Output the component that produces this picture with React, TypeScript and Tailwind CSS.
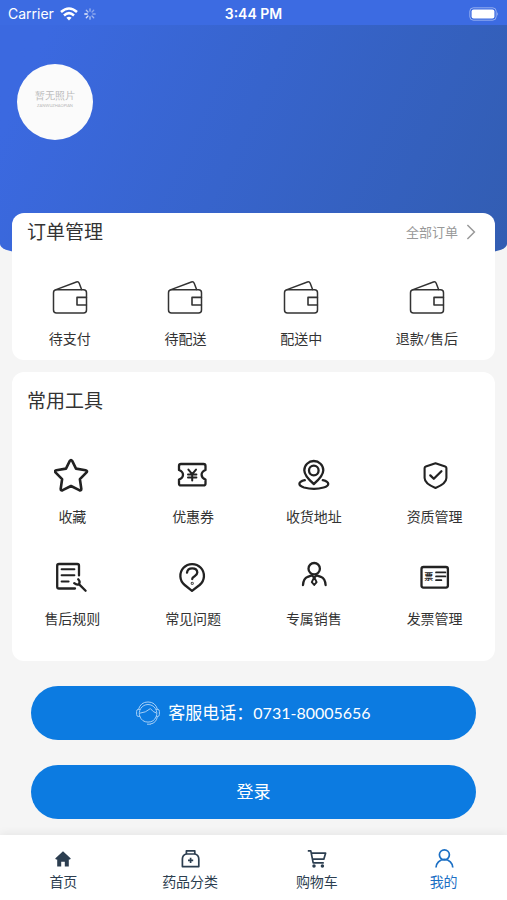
import React from "react";

const WalletIcon = () => (
    <svg viewBox="0 0 36 36" className="size-9" fill="none" stroke="#333333" strokeWidth="1.5" strokeLinejoin="round" strokeLinecap="round">
        <rect x="1.5" y="10.8" width="33" height="23.3" rx="3" />
        <path d="M4 10.6 L24.4 3 Q26.4 2.3 27.2 4.3 L29.6 10.6" />
        <path d="M34.4 18.4 H25 V26 H34.4" strokeWidth="1.6" />
    </svg>
);

const StarIcon = () => (
    <>
        <path d="M15.8 3.9 Q17 2 18.2 3.9 L22 11.6 L31.6 13.2 Q34 13.9 32.3 15.7 L25.9 22.2 L27.3 31.8 Q27.4 34 25.3 33.2 L17 29 L8.7 33.2 Q6.6 34 6.7 31.8 L8.1 22.2 L1.7 15.7 Q0 13.9 2.4 13.2 L12 11.6 Z" strokeWidth="2.6" />
    </>
);

const CouponIcon = () => (
    <>
        <path d="M6 7 H28.5 Q30.5 7 30.5 9 V13 Q26.6 14.6 26.6 17.8 Q26.6 21 30.5 22.6 V26.4 Q30.5 28.4 28.5 28.4 H6 Q4 28.4 4 26.4 V22.6 Q8 21 8 17.8 Q8 14.6 4 13 V9 Q4 7 6 7 Z" />
        <path d="M13.4 12.6 L17.2 17.2 L21 12.6 M17.2 17.2 V23.6 M13 17.4 H21.4 M13 20.6 H21.4" strokeWidth="2" />
    </>
);

const AddressIcon = () => (
    <>
        <path d="M17.8 27 Q8.3 19 8.3 13.3 A9.5 9.3 0 0 1 27.3 13.3 Q27.3 19 17.8 27 Z" />
        <circle cx="17.8" cy="13.5" r="4.8" />
        <path d="M8.8 23.2 C1.5 25 2 28.6 8 30.5 C14 32.1 22 32.1 27.6 30.5 C33.8 28.6 34 25 26.8 23.2" />
    </>
);

const ShieldIcon = () => (
    <>
        <path d="M18.5 6.2 L28.2 9.4 Q29.4 9.8 29.4 11 V21 Q29.4 26.5 18.5 31 Q7.6 26.5 7.6 21 V11 Q7.6 9.8 8.8 9.4 Z" strokeWidth="2.1" />
        <path d="M13.3 18.4 L16.8 21.8 L24.4 14.2" />
    </>
);

const RulesIcon = () => (
    <>
        <path d="M21 29.5 H5 Q3.2 29.5 3.2 27.7 V6.7 Q3.2 5 5 5 H23.3 Q25 5 25 6.7 V16.4" />
        <path d="M7.6 10.2 H20.4 M7.6 16.2 H20.4 M7.6 22.6 H14.6" strokeWidth="2" />
        <path d="M20.2 24.2 Q23.3 26.8 25.2 24.8 Q26.4 22.5 24.2 20.3 M25.2 25.4 L31.6 31.8" />
    </>
);

const QuestionIcon = () => (
    <>
        <path d="M17 31.8 L9.7 26 A11.8 11.8 0 1 1 24.6 26 Z" />
        <path d="M12 13.6 Q12.6 9.4 17.2 9.4 Q22.2 9.4 22.3 13.6 Q22.3 15.6 19.6 17.2 Q17.2 18.6 17.2 20" />
        <circle cx="17.2" cy="24.2" r="0.4" />
    </>
);

const SalesIcon = () => (
    <>
        <circle cx="18.2" cy="9.7" r="5.7" />
        <path d="M7 26 Q7.4 19.6 11.8 17.8 L15.6 16.4 L18.2 18.4 L20.8 16.4 L24.8 17.8 Q29.2 19.6 29.6 26" />
        <path d="M18.2 18.2 L15.8 23.2 L18.2 26 L20.6 23.2 Z" strokeWidth="1.9" />
    </>
);

const InvoiceIcon = () => (
    <>
        <rect x="4.5" y="8" width="26.4" height="20.6" rx="2" />
        <text x="7.3" y="20.6" fontSize="9" fontWeight="700" fill="#222222" stroke="none">票</text>
        <path d="M19 13.4 H28.4 M19 17.4 H28.4 M19 21.2 H24.4" strokeWidth="1.7" />
    </>
);

const HeadsetIcon = () => (
    <svg viewBox="0 0 24 26" className="h-[26px] w-6" fill="none" stroke="#a5cff7" strokeWidth="1" strokeLinecap="round" strokeLinejoin="round">
        <path d="M2.6 9 A9.8 9.8 0 0 1 21.4 9" />
        <path d="M3.8 16.5 A8.8 8.8 0 1 1 20.2 16.5 A8.8 8.8 0 0 1 3.8 16.5" />
        <path d="M3.6 9.4 H2.2 Q0.6 9.4 0.6 11.4 V14.4 Q0.6 16.4 2.2 16.4 H3.6 M20.4 9.4 H21.8 Q23.4 9.4 23.4 11.4 V14.4 Q23.4 16.4 21.8 16.4 H20.4" />
        <path d="M4 13.2 Q9.6 12.8 14.4 8.6 Q17 12.2 20.2 13" />
        <path d="M21.4 16.6 Q20.6 23 14.6 24 M11.4 24.2 H14.4" />
    </svg>
);

const HomeIcon = () => (
    <path fill="currentColor" stroke="none" d="M12 4.2 L19.8 11.6 L19 12.4 H17.8 V19.6 H13.8 V14.8 H10.2 V19.6 H6.2 V12.4 H5 L4.2 11.6 Z" />
);

const MedicineIcon = () => (
    <>
        <path d="M8.4 3.8 H16.8 V7 H8.4 Z" />
        <path d="M8.4 7 Q4.4 8 4.4 12 V19.6 H20.8 V12 Q20.8 8 16.8 7" />
        <path d="M12.6 10.8 V16 M10 13.4 H15.2" />
    </>
);

const CartIcon = () => (
    <>
        <path d="M2.8 3.9 H5.8 L8.2 15.8 H18.8 M6.4 6.2 H20.6 L18.8 12.2 H7.6" />
        <circle cx="9" cy="19" r="0.9" fill="currentColor" />
        <circle cx="17.4" cy="19" r="0.9" fill="currentColor" />
    </>
);

const UserIcon = () => (
    <>
        <circle cx="12.4" cy="7.8" r="5" />
        <path d="M4 20.6 A8.4 8.2 0 0 1 20.8 20.6" />
    </>
);

const orders = ["待支付", "待配送", "配送中", "退款/售后"];

const tools = [
    { label: "收藏", Icon: StarIcon },
    { label: "优惠券", Icon: CouponIcon },
    { label: "收货地址", Icon: AddressIcon },
    { label: "资质管理", Icon: ShieldIcon },
    { label: "售后规则", Icon: RulesIcon },
    { label: "常见问题", Icon: QuestionIcon },
    { label: "专属销售", Icon: SalesIcon },
    { label: "发票管理", Icon: InvoiceIcon },
];

const tabs = [
    { label: "首页", Icon: HomeIcon, active: false },
    { label: "药品分类", Icon: MedicineIcon, active: false },
    { label: "购物车", Icon: CartIcon, active: false },
    { label: "我的", Icon: UserIcon, active: true },
];

const StatusBar = () => (
    <div className="grid h-[25px] grid-cols-3 items-center bg-[#3c6be2] px-2 pt-0.5 font-['Inter','Liberation_Sans',sans-serif] text-sm text-white">
        <div className="flex items-center gap-1.5">
            <span>Carrier</span>
            <svg viewBox="0 0 18 14" className="h-3.5 w-[18px]" fill="none" stroke="white" strokeWidth="2.6">
                <path d="M1 5 Q9 -2 17 5" />
                <path d="M4 8.4 Q9 4 14 8.4" />
                <path d="M9 13.4 L6.4 10.8 Q9 8.8 11.6 10.8 Z" fill="white" stroke="none" />
            </svg>
            <svg viewBox="0 0 12 12" className="size-3" stroke="white" strokeWidth="1.3" strokeLinecap="round">
                <path d="M6 0.8 V3.2" opacity="0.5" />
                <path d="M9.7 2.3 L8 4" opacity="0.4" />
                <path d="M11.2 6 H8.8" opacity="0.4" />
                <path d="M9.7 9.7 L8 8" opacity="0.5" />
                <path d="M6 11.2 V8.8" opacity="0.6" />
                <path d="M2.3 9.7 L4 8" opacity="0.8" />
                <path d="M0.8 6 H3.2" opacity="0.9" />
                <path d="M2.3 2.3 L4 4" opacity="0.6" />
            </svg>
        </div>
        <div className="text-center font-semibold">3:44 PM</div>
        <svg viewBox="0 0 30 14" className="h-3.5 w-[30px] justify-self-end">
            <rect x="0.8" y="0.8" width="26.4" height="12.4" rx="3.6" fill="none" stroke="white" strokeOpacity="0.45" />
            <rect x="2.6" y="2.6" width="22.8" height="8.8" rx="2" fill="white" />
            <path d="M28.2 5 Q30 7 28.2 9 Z" fill="white" fillOpacity="0.5" />
        </svg>
    </div>
);

const App = () => {
    return (
        <div className="flex min-h-screen flex-col bg-[#f5f5f5] font-['Lato','Noto_Sans_CJK_SC',sans-serif] text-[#333333]">
            {/* Header */}
            <header className="overflow-hidden rounded-[0_0_20px_20px/0_0_8px_8px] bg-linear-115 from-[#3b69e0] from-10% to-[#325db2]">
                <StatusBar />
                <div className="h-[227px] px-[17px] pt-[39px]">
                    <div className="flex size-[76px] flex-col items-center justify-center rounded-full bg-[#fbfbfb] pb-1 text-[#b8b8b8]">
                        <span className="font-serif text-[10px] leading-3">暂无照片</span>
                        <span className="text-[4px] leading-2">ZANWUZHAOPIAN</span>
                    </div>
                </div>
            </header>

            <main className="flex flex-col gap-3 px-3 pb-4">
                {/* Orders */}
                <section className="-mt-[39px] rounded-xl bg-white pt-[7px] pb-[11px]">
                    <div className="flex items-center justify-between pr-[19px] pl-[15px]">
                        <h2 className="text-[19px] leading-6">订单管理</h2>
                        <a href="#orders" className="flex items-center gap-2 text-[13px] leading-6 text-[#999999]">
                            全部订单
                            <svg viewBox="0 0 10 16" className="h-4 w-2.5" fill="none" stroke="currentColor" strokeWidth="1.5">
                                <path d="M1.4 1 L8.4 8 L1.4 15" />
                            </svg>
                        </a>
                    </div>
                    <div className="mt-[35px] flex justify-around">
                        {orders.map((label) => (
                            <button key={label} type="button" className="flex flex-col items-center gap-3.5 text-sm leading-5">
                                <WalletIcon />
                                {label}
                            </button>
                        ))}
                    </div>
                </section>

                {/* Tools */}
                <section className="rounded-xl bg-white pt-[17px] pb-8">
                    <h2 className="pl-[15px] text-[19px] leading-6">常用工具</h2>
                    <div className="mt-11 grid grid-cols-4 gap-y-8">
                        {tools.map(({ label, Icon }) => (
                            <button key={label} type="button" className="flex flex-col items-center gap-3.5 text-sm leading-5">
                                <svg viewBox="0 0 36 36" className="size-9" fill="none" stroke="#222222" strokeWidth="2.3" strokeLinecap="round" strokeLinejoin="round">
                                    <Icon />
                                </svg>
                                {label}
                            </button>
                        ))}
                    </div>
                </section>

                <div className="mt-[13px] flex flex-col gap-[25px] px-[19px] text-[17px] text-white">
                    <a href="tel:0731-80005656" className="flex h-[54px] items-center justify-center gap-2 rounded-full bg-[#0c7be1]">
                        <HeadsetIcon />
                        <span>
                            客服电话：<span className="text-base">0731-80005656</span>
                        </span>
                    </a>
                    <button type="button" className="h-[54px] rounded-full bg-[#0c7be1]">
                        登录
                    </button>
                </div>
            </main>

            {/* Tab bar */}
            <nav className="mt-auto grid grid-cols-4 bg-white pt-3 pb-2 shadow-[0_-2px_8px_rgba(0,0,0,0.06)]">
                {tabs.map(({ label, Icon, active }) => (
                    <a
                        key={label}
                        href="#tab"
                        className={`flex flex-col items-center text-sm leading-[21px] ${active ? "text-[#1b6fc4]" : "text-[#2c3e50]"}`}
                    >
                        <svg viewBox="0 0 24 24" className="size-6" fill="none" stroke="currentColor" strokeWidth="1.7" strokeLinejoin="round">
                            <Icon />
                        </svg>
                        {label}
                    </a>
                ))}
            </nav>
        </div>
    );
};

export default App;
